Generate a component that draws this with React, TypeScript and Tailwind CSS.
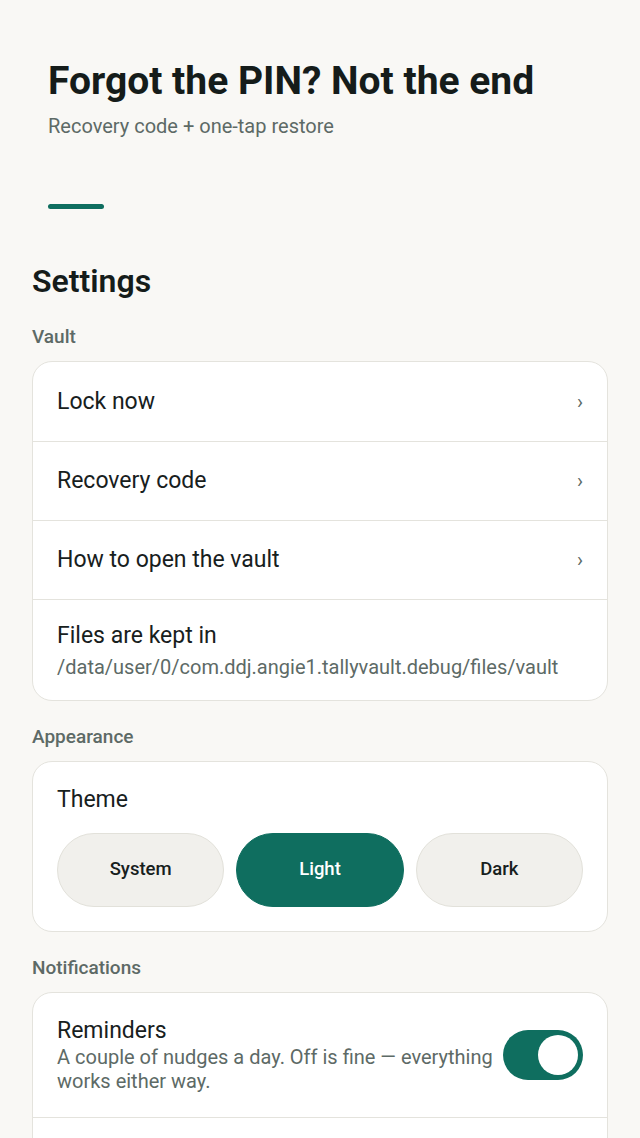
import { useState } from "react";

const font = { fontFamily: "Roboto, 'Noto Sans', sans-serif" };

function SectionLabel({ children }: { children: React.ReactNode }) {
    return <div className="mt-6 mb-3 text-[19px] leading-6 font-medium text-[#5d6a66]">{children}</div>;
}

function NavRow({ label, first }: { label: string; first?: boolean }) {
    return (
        <div className={`flex items-center justify-between px-6 h-[79px] ${first ? "" : "border-t border-[#e4e3dd]"}`}>
            <span className="text-[23px] leading-7 text-[#17201d]">{label}</span>
            <span className="text-[20px] leading-7 text-[#5d6a66]">›</span>
        </div>
    );
}

export default function App() {
    const [theme, setTheme] = useState("Light");
    const [reminders, setReminders] = useState(true);

    return (
        <div style={font} className="min-h-[1138px] bg-[#f9f8f5] overflow-hidden">
            {/* Header */}
            <div className="px-12 pt-[58px]">
                <h1 className="text-[39px] leading-[46px] font-bold text-[#151c1a]">Forgot the PIN? Not the end</h1>
                <p className="mt-2 text-[20px] leading-7 text-[#5d6a66]">Recovery code + one-tap restore</p>
                <div className="mt-16 h-[5px] w-14 rounded-full bg-[#0f6e5f]" />
            </div>

            {/* Settings */}
            <div className="px-8 pt-[52px]">
                <h2 className="text-[32px] leading-10 font-semibold text-[#151c1a]">Settings</h2>

                <SectionLabel>Vault</SectionLabel>
                <div className="bg-white border border-[#e4e3dd] rounded-[20px] overflow-hidden">
                    <NavRow label="Lock now" first />
                    <NavRow label="Recovery code" />
                    <NavRow label="How to open the vault" />
                    <div className="border-t border-[#e4e3dd] px-6 pt-[22px] pb-5">
                        <div className="text-[23px] leading-7 text-[#17201d]">Files are kept in</div>
                        <div className="mt-1 text-[20px] leading-[26px] text-[#5d6a66]">/data/user/0/com.ddj.angie1.tallyvault.debug/files/vault</div>
                    </div>
                </div>

                <SectionLabel>Appearance</SectionLabel>
                <div className="bg-white border border-[#e4e3dd] rounded-[20px] px-6 pt-6 pb-6">
                    <div className="text-[23px] leading-7 text-[#17201d]">Theme</div>
                    <div className="mt-[19px] grid grid-cols-3 gap-3">
                        {["System", "Light", "Dark"].map((t) => (
                            <button
                                key={t}
                                onClick={() => setTheme(t)}
                                className={`h-[74px] rounded-full text-[18.5px] font-medium border ${
                                    theme === t
                                        ? "bg-[#0f6e5f] border-[#0f6e5f] text-white"
                                        : "bg-[#f1f0ec] border-[#e2e1da] text-[#17201d]"
                                }`}
                            >
                                {t}
                            </button>
                        ))}
                    </div>
                </div>

                <SectionLabel>Notifications</SectionLabel>
                <div className="bg-white border border-[#e4e3dd] rounded-[20px] overflow-hidden">
                    <div className="flex items-center gap-1.5 px-6 pt-6 pb-6">
                        <div className="flex-1">
                            <div className="text-[23px] leading-7 text-[#17201d]">Reminders</div>
                            <div className="text-[20px] leading-6 text-[#5d6a66]">
                                A couple of nudges a day. Off is fine — everything works either way.
                            </div>
                        </div>
                        <button
                            onClick={() => setReminders(!reminders)}
                            className={`shrink-0 w-20 h-[50px] rounded-full flex items-center px-[5px] ${
                                reminders ? "bg-[#0f6e5f] justify-end" : "bg-[#d9d8d2] justify-start"
                            }`}
                        >
                            <span className="w-10 h-10 rounded-full bg-white" />
                        </button>
                    </div>
                    <div className="border-t border-[#e4e3dd] h-20" />
                </div>
            </div>
        </div>
    );
}
